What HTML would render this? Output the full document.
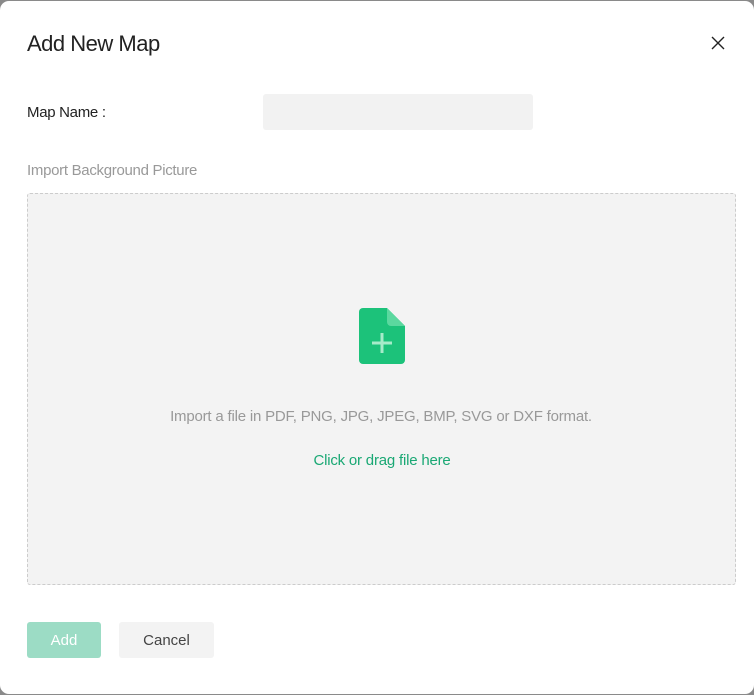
<!DOCTYPE html>
<html><head><style>
body{margin:0;width:754px;height:695px;background:#8a8a8a;font-family:"Liberation Sans",sans-serif;overflow:hidden;position:relative}
.d{position:absolute;left:0;top:1px;width:754px;height:693px;background:#fff;border-radius:9px}
.t{position:absolute;left:27px;top:31px;font-size:22px;color:#222;letter-spacing:-0.5px}
.x{position:absolute;left:710px;top:35px}
.l{position:absolute;left:27px;top:104px;font-size:15px;color:#222;letter-spacing:-0.3px}
.in{position:absolute;left:263px;top:94px;width:270px;height:36px;background:#f2f2f2;border-radius:3px}
.l2{position:absolute;left:27px;top:162px;font-size:15px;color:#999;letter-spacing:-0.3px}
.drop{position:absolute;left:27px;top:193px;width:707px;height:390px;background:#f3f3f3;border:1px dashed #ccc;border-radius:3px}
.ic{position:absolute;left:359px;top:308px}
.m1{position:absolute;left:0;width:762px;text-align:center;top:408px;font-size:15px;color:#999;letter-spacing:-0.2px}
.m2{position:absolute;left:0;width:764px;text-align:center;top:452px;font-size:15px;color:#1aa874;letter-spacing:-0.2px}
.b1{position:absolute;left:27px;top:622px;width:74px;height:36px;background:#9cdcc5;border-radius:3px;color:#fff;font-size:15px;text-align:center;line-height:38px}
.b2{position:absolute;left:119px;top:622px;width:95px;height:36px;background:#f3f3f3;border-radius:3px;color:#444;font-size:15px;text-align:center;line-height:38px}
</style></head><body>
<div class="d"></div>
<div class="t">Add New Map</div>
<svg class="x" width="16" height="16" viewBox="0 0 16 16"><path d="M2 2L14 14M14 2L2 14" stroke="#222" stroke-width="1.4"/></svg>
<div class="l">Map Name :</div>
<div class="in"></div>
<div class="l2">Import Background Picture</div>
<div class="drop"></div>
<svg class="ic" width="46" height="56" viewBox="0 0 46 56"><path d="M4 0H28L46 18V52a4 4 0 0 1-4 4H4a4 4 0 0 1-4-4V4a4 4 0 0 1 4-4z" fill="#1cc27a"/><path d="M28 0L46 18H32a4 4 0 0 1-4-4z" fill="#5bd89f"/><path d="M23 25V45M13 35H33" stroke="#a6ebc9" stroke-width="3"/></svg>
<div class="m1">Import a file in PDF, PNG, JPG, JPEG, BMP, SVG or DXF format.</div>
<div class="m2">Click or drag file here</div>
<div class="b1">Add</div>
<div class="b2">Cancel</div>
</body></html>
